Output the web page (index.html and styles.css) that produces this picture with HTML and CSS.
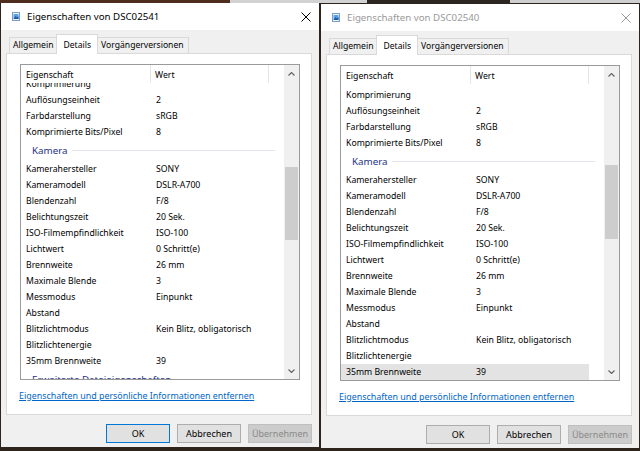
FILE: index.html
```html
<!DOCTYPE html>
<html lang="de">
<head>
<meta charset="utf-8">
<title>Eigenschaften von DSC02541</title>
<link rel="stylesheet" href="styles.css">
</head>
<body>
<div class="desk">
  <section class="win active">
    <header class="titlebar">
      <svg class="ticon" viewBox="0 0 8 9"><rect x="0.5" y="0.5" width="7" height="8" fill="#eef4fb" stroke="#7d9cc4"/><rect x="1.5" y="2" width="5" height="5" fill="#5aa0e6"/><path d="M1.5 7 L3.5 4 L5 5.5 L6.5 4 V7 Z" fill="#1d5aa6"/></svg>
      <span class="ttext">Eigenschaften von DSC02541</span>
      <svg class="close" viewBox="0 0 10 10"><path d="M0.5 0.5L9.5 9.5M9.5 0.5L0.5 9.5"/></svg>
    </header>
    <nav class="tabs">
      <div class="tab">Allgemein</div>
      <div class="tab sel">Details</div>
      <div class="tab wide">Vorgängerversionen</div>
    </nav>
    <div class="panel">
      <div class="list">
        <div class="lmain">
          <div class="lhead"><div class="hc c1">Eigenschaft</div><div class="hc c2">Wert</div></div>
          <div class="lview">
            <div class="lrows off-a">
              <div class="row"><span class="c1">Komprimierung</span><span class="c2"></span></div>
              <div class="row"><span class="c1">Auflösungseinheit</span><span class="c2">2</span></div>
              <div class="row"><span class="c1">Farbdarstellung</span><span class="c2">sRGB</span></div>
              <div class="row"><span class="c1">Komprimierte Bits/Pixel</span><span class="c2">8</span></div>
              <div class="grp">Kamera</div>
              <div class="row"><span class="c1">Kamerahersteller</span><span class="c2">SONY</span></div>
              <div class="row"><span class="c1">Kameramodell</span><span class="c2">DSLR-A700</span></div>
              <div class="row"><span class="c1">Blendenzahl</span><span class="c2">F/8</span></div>
              <div class="row"><span class="c1">Belichtungszeit</span><span class="c2">20 Sek.</span></div>
              <div class="row"><span class="c1">ISO-Filmempfindlichkeit</span><span class="c2">ISO-100</span></div>
              <div class="row"><span class="c1">Lichtwert</span><span class="c2">0 Schritt(e)</span></div>
              <div class="row"><span class="c1">Brennweite</span><span class="c2">26 mm</span></div>
              <div class="row"><span class="c1">Maximale Blende</span><span class="c2">3</span></div>
              <div class="row"><span class="c1">Messmodus</span><span class="c2">Einpunkt</span></div>
              <div class="row"><span class="c1">Abstand</span><span class="c2"></span></div>
              <div class="row"><span class="c1">Blitzlichtmodus</span><span class="c2">Kein Blitz, obligatorisch</span></div>
              <div class="row"><span class="c1">Blitzlichtenergie</span><span class="c2"></span></div>
              <div class="row"><span class="c1">35mm Brennweite</span><span class="c2">39</span></div>
              <div class="grp">Erweiterte Dateieigenschaften</div>
            </div>
          </div>
        </div>
        <div class="sbar">
          <div class="sbtn"><svg viewBox="0 0 7 4"><path d="M0.5 3.5L3.5 0.5L6.5 3.5"/></svg></div>
          <div class="strack"><div class="thumb" style="margin-top:85px;height:73px"></div></div>
          <div class="sbtn"><svg viewBox="0 0 7 4"><path d="M0.5 0.5L3.5 3.5L6.5 0.5"/></svg></div>
        </div>
      </div>
      <a class="link" href="#">Eigenschaften und persönliche Informationen entfernen</a>
    </div>
    <footer class="btns">
      <button class="btn def">OK</button>
      <button class="btn">Abbrechen</button>
      <button class="btn dis" disabled>Übernehmen</button>
    </footer>
  </section>

  <section class="win inactive">
    <header class="titlebar">
      <svg class="ticon" viewBox="0 0 8 9"><rect x="0.5" y="0.5" width="7" height="8" fill="#eef4fb" stroke="#7d9cc4"/><rect x="1.5" y="2" width="5" height="5" fill="#5aa0e6"/><path d="M1.5 7 L3.5 4 L5 5.5 L6.5 4 V7 Z" fill="#1d5aa6"/></svg>
      <span class="ttext">Eigenschaften von DSC02540</span>
      <svg class="close" viewBox="0 0 10 10"><path d="M0.5 0.5L9.5 9.5M9.5 0.5L0.5 9.5"/></svg>
    </header>
    <nav class="tabs">
      <div class="tab">Allgemein</div>
      <div class="tab sel">Details</div>
      <div class="tab wide">Vorgängerversionen</div>
    </nav>
    <div class="panel">
      <div class="list">
        <div class="lmain">
          <div class="lhead"><div class="hc c1">Eigenschaft</div><div class="hc c2">Wert</div></div>
          <div class="lview">
            <div class="lrows off-b">
              <div class="row"><span class="c1">Komprimierung</span><span class="c2"></span></div>
              <div class="row"><span class="c1">Auflösungseinheit</span><span class="c2">2</span></div>
              <div class="row"><span class="c1">Farbdarstellung</span><span class="c2">sRGB</span></div>
              <div class="row"><span class="c1">Komprimierte Bits/Pixel</span><span class="c2">8</span></div>
              <div class="grp">Kamera</div>
              <div class="row"><span class="c1">Kamerahersteller</span><span class="c2">SONY</span></div>
              <div class="row"><span class="c1">Kameramodell</span><span class="c2">DSLR-A700</span></div>
              <div class="row"><span class="c1">Blendenzahl</span><span class="c2">F/8</span></div>
              <div class="row"><span class="c1">Belichtungszeit</span><span class="c2">20 Sek.</span></div>
              <div class="row"><span class="c1">ISO-Filmempfindlichkeit</span><span class="c2">ISO-100</span></div>
              <div class="row"><span class="c1">Lichtwert</span><span class="c2">0 Schritt(e)</span></div>
              <div class="row"><span class="c1">Brennweite</span><span class="c2">26 mm</span></div>
              <div class="row"><span class="c1">Maximale Blende</span><span class="c2">3</span></div>
              <div class="row"><span class="c1">Messmodus</span><span class="c2">Einpunkt</span></div>
              <div class="row"><span class="c1">Abstand</span><span class="c2"></span></div>
              <div class="row"><span class="c1">Blitzlichtmodus</span><span class="c2">Kein Blitz, obligatorisch</span></div>
              <div class="row"><span class="c1">Blitzlichtenergie</span><span class="c2"></span></div>
              <div class="row sel"><span class="c1">35mm Brennweite</span><span class="c2">39</span></div>
            </div>
          </div>
        </div>
        <div class="sbar">
          <div class="sbtn"><svg viewBox="0 0 7 4"><path d="M0.5 3.5L3.5 0.5L6.5 3.5"/></svg></div>
          <div class="strack"><div class="thumb" style="margin-top:82px;height:74px"></div></div>
          <div class="sbtn"><svg viewBox="0 0 7 4"><path d="M0.5 0.5L3.5 3.5L6.5 0.5"/></svg></div>
        </div>
      </div>
      <a class="link" href="#">Eigenschaften und persönliche Informationen entfernen</a>
    </div>
    <footer class="btns">
      <button class="btn">OK</button>
      <button class="btn">Abbrechen</button>
      <button class="btn dis" disabled>Übernehmen</button>
    </footer>
  </section>
</div>
</body>
</html>
```

FILE: styles.css
```css
* { box-sizing: border-box; }
html, body { margin: 0; padding: 0; }
body {
  width: 640px;
  height: 451px;
  overflow: hidden;
  background:
    linear-gradient(to right, #4e2c1e 0 230px, #d2d2d2 230px 367px, #2c2622 367px 510px, #cfcfcf 510px) top left / 100% 3px no-repeat,
    #2f241c;
  font-family: "Noto Sans", "Open Sans", "DejaVu Sans", sans-serif;
  font-size: 9px;
  color: #000;
}
.desk {
  display: flex;
  align-items: flex-start;
  gap: 2px;
  padding: 3px 0 0 1px;
}
.win {
  width: 318px;
  height: 444px;
  background: #f0f0f0;
  display: flex;
  flex-direction: column;
  flex: none;
}
.win.inactive { margin-top: 1px; }

.titlebar {
  height: 27px;
  flex: none;
  background: #fff;
  display: flex;
  align-items: center;
  padding: 0 8px 0 11px;
}
.ticon { width: 8px; height: 9px; margin-right: 7px; flex: none; }
.ttext { font-size: 9.7px; line-height: 14px; white-space: nowrap; }
.close { margin-left: auto; width: 10px; height: 10px; stroke: #000; stroke-width: 1; fill: none; flex: none; }
.inactive .ttext { color: #9a9a9a; }
.inactive .close { stroke: #9a9a9a; }

.tabs {
  display: flex;
  align-items: flex-end;
  height: 20px;
  margin: 4px 0 -1px 8px;
  position: relative;
  z-index: 1;
  flex: none;
  font-size: 8.6px;
}
.tab {
  height: 16px;
  margin-bottom: 1px;
  padding: 0 3px;
  border: 1px solid #d9d9d9;
  border-bottom: none;
  background: #f0f0f0;
  line-height: 15px;
  white-space: nowrap;
}
.tab + .tab { margin-left: -1px; }
.tab.wide { padding: 0 4px 0 3px; }
.tab.sel {
  height: 20px;
  margin-bottom: 0;
  padding: 3px 6px 0 6px;
  line-height: 14px;
  background: #fff;
  position: relative;
}

.panel {
  height: 362px;
  flex: none;
  margin: 0 7px 0 5px;
  background: #fff;
  border: 1px solid #d9d9d9;
  padding: 10px 11px 0 13px;
}
.list {
  height: 316px;
  border: 1px solid #9a9a9a;
  display: flex;
  background: #fff;
  font-size: 8.7px;
}
.lmain {
  flex: 1;
  min-width: 0;
  display: flex;
  flex-direction: column;
}
.lhead { height: 18px; flex: none; display: flex; }
.hc { height: 18px; padding-top: 2px; line-height: 16px; white-space: nowrap; }
.hc.c1 { width: 130px; padding-left: 5px; border-right: 1px solid #e5e5e5; }
.hc.c2 { width: 118px; padding-left: 4px; border-right: 1px solid #e5e5e5; }
.lview { flex: 1; overflow: hidden; }
.off-a { margin-top: -7px; }
.off-b { padding-top: 3px; }
.row { display: flex; height: 16px; line-height: 16px; white-space: nowrap; }
.row .c1 { width: 130px; padding-left: 5px; flex: none; }
.row .c2 { padding-left: 5px; }
.row.sel { width: 248px; background: #e3e3e3; }
.grp {
  display: flex;
  align-items: center;
  height: 21px;
  padding: 0 9px 0 11px;
  color: #1e3287;
  font-size: 9.8px;
  white-space: nowrap;
}
.grp::after {
  content: "";
  flex: 1;
  height: 1px;
  background: #e2e5ec;
  margin-left: 4px;
}
.sbar {
  width: 15px;
  flex: none;
  background: #f0f0f0;
  display: flex;
  flex-direction: column;
}
.sbtn {
  height: 17px;
  flex: none;
  display: flex;
  align-items: center;
  justify-content: center;
}
.sbtn svg { width: 7px; height: 4px; stroke: #606060; stroke-width: 1.1; fill: none; }
.strack { flex: 1; padding: 0 1px; }
.thumb { background: #cdcdcd; }

.link {
  display: inline-block;
  margin: 10px 0 0 -1px;
  color: #0066cc;
  text-decoration: underline;
  line-height: 12px;
  font-size: 8.9px;
  white-space: nowrap;
}

.btns {
  display: flex;
  justify-content: flex-end;
  gap: 7px;
  padding: 9px 7px 0 0;
  flex: none;
}
.btn {
  width: 64px;
  height: 19px;
  margin: 0;
  padding: 0;
  font-family: inherit;
  font-size: 9px;
  line-height: 15px;
  color: #000;
  background: #e1e1e1;
  border: 1px solid #adadad;
  border-radius: 0;
}
.btn.def { border-color: #0078d7; }
.btn.dis { background: #cccccc; border-color: #bfbfbf; color: #8a8a8a; }
```
